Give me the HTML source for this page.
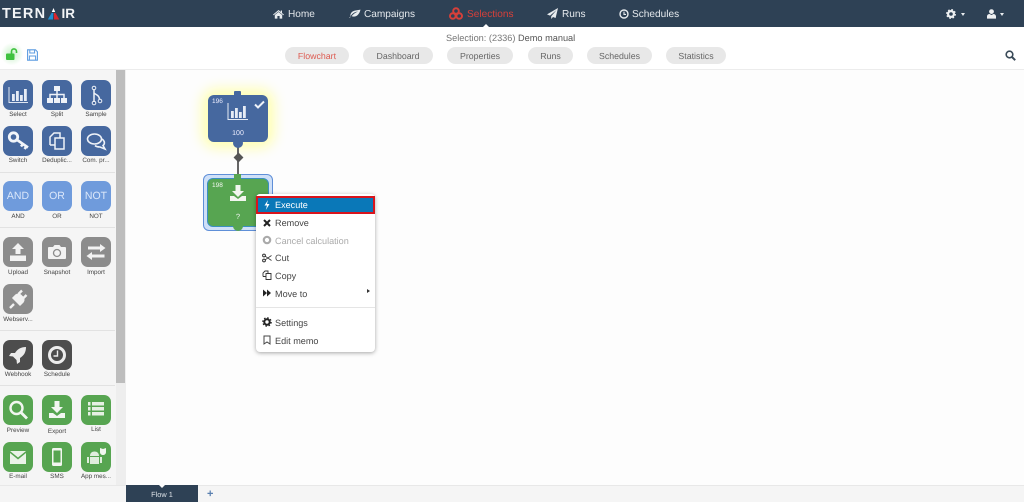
<!DOCTYPE html>
<html><head><meta charset="utf-8">
<style>
*{box-sizing:border-box}
html,body{margin:0;padding:0;width:1024px;height:502px;overflow:hidden;background:#fff;font-family:"Liberation Sans",sans-serif;text-rendering:geometricPrecision}
.a{position:absolute}
#nav{left:0;top:0;width:1024px;height:27px;background:#2e4155}
.nt{position:absolute;top:8px;font-size:10.1px;line-height:14px;color:#e4e8ec;white-space:nowrap}
.tab{position:absolute;top:47px;height:17px;border-radius:9px;background:#e8e8e8;color:#666;font-size:8.8px;line-height:18px;text-align:center}
.ic{position:absolute;width:30px;height:30px;border-radius:7px}
.ic svg{position:absolute;left:0;top:0;width:30px;height:30px}
.b{background:#46689f}.l{background:#6f9bdc}.g{background:#8c8c8c}.d{background:#4d4d4d}.gr{background:#57a551}
.lb{position:absolute;width:40px;text-align:center;font-size:6.3px;line-height:10px;color:#444;white-space:nowrap}
.txt{color:#dbe7fa;font-size:10.5px;line-height:31px;text-align:center;display:block}
.sep{position:absolute;left:0;width:115px;height:1px;background:#e2e2e2}
.mi{position:absolute;left:19px;font-size:9.1px;line-height:12px;color:#444;white-space:nowrap}
.mic{position:absolute;left:6px;width:10px;height:10px}
</style></head><body>

<div class="a" id="nav"></div>
<div class="a" style="left:2px;top:6px;font-size:14.5px;line-height:16px;font-weight:bold;color:#f2f4f6;letter-spacing:1.2px;white-space:nowrap">TERN</div>
<svg class="a" style="left:47px;top:8px" width="13" height="12" viewBox="0 0 13 12"><path d="M6.500 0 8.200 4H4.800z" fill="#fff"/><path d="M4.500 5H6.300L6 11.500H.8z" fill="#1f8ed0"/><path d="M6.800 5H8.500L12.300 11.500H7z" fill="#d9262e"/></svg>
<div class="a" style="left:61.500px;top:6px;font-size:13.500px;line-height:16px;font-weight:bold;color:#f2f4f6;white-space:nowrap">IR</div>

<svg class="a" style="left:273px;top:9px" width="11" height="10" viewBox="0 0 11 10"><path d="M5.500 1 0 5.600l.7.7L5.500 2.400l4.800 3.900.7-.7L9 4V1.500H7.800v1.400zM1.800 6v3.600h2.600V7h2.200v2.600h2.600V6L5.500 3z" fill="#e8ecef"/></svg>
<div class="nt" style="left:288px">Home</div>
<svg class="a" style="left:349px;top:9px" width="12" height="10" viewBox="0 0 12 10"><path d="M1 9C2 5 5 3 9 2.500 6 3.800 4 5.300 2.600 7.200 6 8.400 10 7 11.500.6 8 1.500 3 1 1.600 5c-.3.9-.2 1.500 0 2L.3 9z" fill="#e8ecef"/></svg>
<div class="nt" style="left:364px">Campaigns</div>
<svg class="a" style="left:449px;top:7px" width="14" height="13" viewBox="0 0 14 13"><g fill="none" stroke="#d6403a" stroke-width="2"><circle cx="7" cy="4" r="2.800"/><circle cx="3.800" cy="9" r="2.800"/><circle cx="10.200" cy="9" r="2.800"/></g></svg>
<div class="nt" style="left:467px;color:#d6403a">Selections</div>
<div class="a" style="left:483px;top:24px;width:0;height:0;border-left:3px solid transparent;border-right:3px solid transparent;border-bottom:3px solid #fff"></div>
<svg class="a" style="left:547px;top:8px" width="11" height="11" viewBox="0 0 11 11"><path d="M11 0 0 6.400l3 1.200L9.600 2 4.200 8.200V11l1.800-2 2.600 1z" fill="#e8ecef"/></svg>
<div class="nt" style="left:562px">Runs</div>
<svg class="a" style="left:619px;top:9px" width="10" height="10" viewBox="0 0 10 10"><circle cx="5" cy="5" r="4" fill="none" stroke="#e8ecef" stroke-width="1.400"/><path d="M5 2.600V5.400H7" fill="none" stroke="#e8ecef" stroke-width="1.100"/></svg>
<div class="nt" style="left:632px">Schedules</div>
<svg class="a" style="left:946px;top:9px" width="10" height="10" viewBox="0 0 10 10"><circle cx="5" cy="5" r="2.900" fill="none" stroke="#eef0f2" stroke-width="2.200"/><circle cx="5" cy="5" r="4.300" fill="none" stroke="#eef0f2" stroke-width="1.300" stroke-dasharray="1.700 1.700"/></svg>
<div class="a" style="left:961px;top:13px;border-left:2.500px solid transparent;border-right:2.500px solid transparent;border-top:3px solid #e8ecef"></div>
<svg class="a" style="left:987px;top:9px" width="9" height="10" viewBox="0 0 9 10"><circle cx="4.500" cy="2.600" r="2.400" fill="#eef0f2"/><path d="M0 9.600V7.400C0 5.800 1.500 5 2.500 5L4.500 6 6.500 5C7.500 5 9 5.800 9 7.400V9.600z" fill="#eef0f2"/></svg>
<div class="a" style="left:1000px;top:13px;border-left:2.500px solid transparent;border-right:2.500px solid transparent;border-top:3px solid #e8ecef"></div>

<div class="a" style="left:446px;top:32px;font-size:9.200px;line-height:13px;color:#777;white-space:nowrap">Selection: (2336) <span style="color:#555">Demo manual</span></div>

<div class="a" style="left:0;top:43px;width:24px;height:22px;background:radial-gradient(circle,#c8f2c8 0,rgba(216,245,216,.5) 45%,rgba(255,255,255,0) 70%)"></div>
<svg class="a" style="left:5px;top:48px" width="14" height="13" viewBox="0 0 14 13"><rect x="1" y="5.500" width="8.500" height="6.500" rx="1" fill="#3fc23f"/><path d="M6.500 5.500V3.500a2.500 2.500 0 0 1 5-.2V5" fill="none" stroke="#3fc23f" stroke-width="1.600"/></svg>
<svg class="a" style="left:27px;top:49px" width="11" height="12" viewBox="0 0 11 12"><path d="M.6.800H8.500L10.400 2.800V11.200H.6z" fill="#fff" stroke="#5b9be0" stroke-width="1.100"/><path d="M2.800 1V4H7.600V1M2.400 11V7H8.600V11" fill="none" stroke="#5b9be0" stroke-width="1"/></svg>

<div class="tab" style="left:285px;width:64px;color:#dd5a50">Flowchart</div>
<div class="tab" style="left:363px;width:70px">Dashboard</div>
<div class="tab" style="left:447px;width:66px">Properties</div>
<div class="tab" style="left:528px;width:45px">Runs</div>
<div class="tab" style="left:587px;width:65px">Schedules</div>
<div class="tab" style="left:666px;width:60px">Statistics</div>
<svg class="a" style="left:1005px;top:50px" width="11" height="11" viewBox="0 0 11 11"><circle cx="4.500" cy="4.500" r="3.300" fill="none" stroke="#3a4a58" stroke-width="1.600"/><path d="M7 7l3.200 3.200" stroke="#3a4a58" stroke-width="2"/></svg>

<div class="a" style="left:0;top:69px;width:1024px;height:1px;background:#ececec"></div>
<div class="a" style="left:0;top:70px;width:126px;height:432px;background:#f5f5f5"></div>
<div class="a" style="left:126px;top:70px;width:898px;height:415px;background:#fdfdfd"></div>
<div class="a" style="left:116px;top:70px;width:10px;height:415px;background:#eeeeee"></div>
<div class="a" style="left:116px;top:70px;width:9px;height:313px;background:#bdbdbd"></div>
<div class="a" style="left:0;top:485px;width:1024px;height:17px;background:#f5f5f5;border-top:1px solid #e8e8e8"></div>
<div class="a" style="left:126px;top:485px;width:72px;height:17px;background:#2e4155;color:#dde2e7;font-size:7.400px;line-height:19px;text-align:center">Flow 1</div>
<div class="a" style="left:158px;top:484px;border-left:4px solid transparent;border-right:4px solid transparent;border-top:4px solid #fdfdfd"></div>
<div class="a" style="left:207px;top:488px;font-size:11px;font-weight:bold;line-height:13px;color:#5a80b0">+</div>

<div class="sep" style="top:172px"></div><div class="sep" style="top:227px"></div><div class="sep" style="top:330px"></div><div class="sep" style="top:385px"></div>

<!-- row 1 -->
<div class="ic b" style="left:3px;top:80px"><svg viewBox="0 0 30 30"><path d="M6 7V22.500H25" fill="none" stroke="#dfe6f2" stroke-width="1"/><path d="M9 14h2.800v7H9zM13 11h2.800v10H13zM17 15h2.800v6H17zM21 9h2.800v12H21z" fill="#e6ecf5"/></svg></div>
<div class="ic b" style="left:42px;top:80px"><svg viewBox="0 0 30 30"><path d="M12 6h6v5h-6zM5 18h6v5H5zM12 18h6v5h-6zM19 18h6v5h-6z" fill="#eef2f8"/><path d="M15 11v7M8 18v-3.500H22V18" fill="none" stroke="#eef2f8" stroke-width="1.500"/></svg></div>
<div class="ic b" style="left:81px;top:80px"><svg viewBox="0 0 30 30"><path d="M13 9V22M13 13C15 15 18 15 18.500 19" fill="none" stroke="#eef2f8" stroke-width="1.500"/><circle cx="13" cy="8" r="1.800" fill="none" stroke="#eef2f8"/><circle cx="13" cy="23" r="1.800" fill="none" stroke="#eef2f8"/><circle cx="19" cy="21" r="1.800" fill="none" stroke="#eef2f8"/></svg></div>
<div class="lb" style="left:-2px;top:110px">Select</div><div class="lb" style="left:37px;top:110px">Split</div><div class="lb" style="left:76px;top:110px">Sample</div>
<!-- row 2 -->
<div class="ic b" style="left:3px;top:126px"><svg viewBox="0 0 30 30"><circle cx="10.500" cy="11" r="4.200" fill="none" stroke="#f2f5fa" stroke-width="2.800"/><path d="M13.500 13.500 25 21.500M20 18l-2 2.500M23.500 20.500l-2 2.500" fill="none" stroke="#f2f5fa" stroke-width="2.600"/></svg></div>
<div class="ic b" style="left:42px;top:126px"><svg viewBox="0 0 30 30"><path d="M8 19V11L12 7h6v5M13 12h9v11H13zM8 19h5" fill="none" stroke="#eef2f8" stroke-width="1.500"/></svg></div>
<div class="ic b" style="left:81px;top:126px"><svg viewBox="0 0 30 30"><ellipse cx="13.500" cy="13" rx="7" ry="5" fill="none" stroke="#eef2f8" stroke-width="1.600"/><path d="M21 13C24 15 24 18 22 19.500L24 23 19 21C17 21 15 20.500 14 19.500" fill="none" stroke="#eef2f8" stroke-width="1.600"/></svg></div>
<div class="lb" style="left:-2px;top:156px">Switch</div><div class="lb" style="left:37px;top:156px">Deduplic...</div><div class="lb" style="left:76px;top:156px">Com. pr...</div>
<!-- logic -->
<div class="ic l" style="left:3px;top:181px"><span class="txt">AND</span></div>
<div class="ic l" style="left:42px;top:181px"><span class="txt">OR</span></div>
<div class="ic l" style="left:81px;top:181px"><span class="txt">NOT</span></div>
<div class="lb" style="left:-2px;top:212px">AND</div><div class="lb" style="left:37px;top:212px">OR</div><div class="lb" style="left:76px;top:212px">NOT</div>
<!-- gray -->
<div class="ic g" style="left:3px;top:237px"><svg viewBox="0 0 30 30"><path d="M15 6l6 6h-3.500v5h-5v-5H9zM7 18.500h16V24H7z" fill="#f2f2f2"/></svg></div>
<div class="ic g" style="left:42px;top:237px"><svg viewBox="0 0 30 30"><path d="M7 10h4l1.500-2h5L19 10h4a1 1 0 0 1 1 1v10a1 1 0 0 1-1 1H7a1 1 0 0 1-1-1V11a1 1 0 0 1 1-1z" fill="#f2f2f2"/><circle cx="15" cy="16" r="3.500" fill="none" stroke="#8c8c8c" stroke-width="1.300"/></svg></div>
<div class="ic g" style="left:81px;top:237px"><svg viewBox="0 0 30 30"><path d="M7 9.500h12V7l5.500 4-5.500 4v-2.500H7zM23.500 17.500H11V15l-5.500 4 5.500 4v-2.500h12.500z" fill="#f2f2f2"/></svg></div>
<div class="lb" style="left:-2px;top:268px">Upload</div><div class="lb" style="left:37px;top:268px">Snapshot</div><div class="lb" style="left:76px;top:268px">Import</div>
<div class="ic g" style="left:3px;top:284px"><svg viewBox="0 0 30 30"><path d="M7 24l4-4" stroke="#f2f2f2" stroke-width="2.400"/><path d="M10 14l7 7 3-3c1-1.500 1-3 0-4.500l-2.500-2.500c-1.500-1-3-1-4.500 0z" fill="#f2f2f2" stroke="#f2f2f2" stroke-width="1.500"/><path d="M15.500 10l3.500-3.500M20 14.500l3.500-3.500" stroke="#f2f2f2" stroke-width="2.400"/></svg></div>
<div class="lb" style="left:-2px;top:315px">Webserv...</div>
<!-- dark -->
<div class="ic d" style="left:3px;top:340px"><svg viewBox="0 0 30 30"><path d="M23 7c-5 0-8.500 2-11 6H8l-2 3 4 .5 3.500 3.500.5 4 3-2v-4c4-2.500 6-6 6-11z" fill="#ececec"/></svg></div>
<div class="ic d" style="left:42px;top:340px"><svg viewBox="0 0 30 30"><circle cx="15" cy="15" r="7.500" fill="none" stroke="#ececec" stroke-width="3"/><path d="M15.500 10.500V16H11.500" fill="none" stroke="#ececec" stroke-width="1.400"/></svg></div>
<div class="lb" style="left:-2px;top:370px">Webhook</div><div class="lb" style="left:37px;top:370px">Schedule</div>
<!-- green -->
<div class="ic gr" style="left:3px;top:395px"><svg viewBox="0 0 30 30"><circle cx="13.500" cy="13" r="6" fill="none" stroke="#f2f6f0" stroke-width="2.400"/><path d="M18 17.500l6 6" stroke="#f2f6f0" stroke-width="2.800"/></svg></div>
<div class="ic gr" style="left:42px;top:395px"><svg viewBox="0 0 30 30"><path d="M12.500 6h5v6H21l-6 6-6-6h3.500zM7 18h4l4 3 4-3h4v5H7z" fill="#f2f6f0"/></svg></div>
<div class="ic gr" style="left:81px;top:395px"><svg viewBox="0 0 30 30"><path d="M7 7h2.500v3.500H7zM11 7h12v3.500H11zM7 12h2.500v3.500H7zM11 12h12v3.500H11zM7 17h2.500v3.500H7zM11 17h12v3.500H11z" fill="#e6f0e4"/></svg></div>
<div class="lb" style="left:-2px;top:426px">Preview</div><div class="lb" style="left:37px;top:427px">Export</div><div class="lb" style="left:76px;top:425px">List</div>
<div class="ic gr" style="left:3px;top:442px"><svg viewBox="0 0 30 30"><path d="M7 9H23L15 15.500zM7 11l8 6.500 8-6.500V22H7z" fill="#eaf3e8"/></svg></div>
<div class="ic gr" style="left:42px;top:442px"><svg viewBox="0 0 30 30"><rect x="10" y="6" width="10" height="18" rx="1.500" fill="#f2f6f0"/><rect x="11.500" y="8.500" width="7" height="12" fill="#57a551"/></svg></div>
<div class="ic gr" style="left:81px;top:442px"><svg viewBox="0 0 30 30"><path d="M9 15h9v7H9zM9 14c0-3 2-4.500 4.500-4.500S18 11 18 14zM6 15h2v6H6zM19 15h2v6h-2z" fill="#e0eddd"/><path d="M19 6l3 1 3-1v4c0 2-1.500 3-3 3s-3-1-3-3z" fill="#f2f6f0"/></svg></div>
<div class="lb" style="left:-2px;top:472px">E-mail</div><div class="lb" style="left:37px;top:472px">SMS</div><div class="lb" style="left:76px;top:472px">App mes...</div>

<!-- flow -->
<div class="a" style="left:208px;top:95px;width:60px;height:47px;background:#ffffa0;box-shadow:0 0 13px 6px #ffffb0;border-radius:8px"></div>
<div class="a" style="left:237px;top:143px;width:2px;height:34px;background:#666"></div>
<div class="a" style="left:234.500px;top:154px;width:7px;height:7px;background:#555;transform:rotate(45deg)"></div>
<div class="a" style="left:234px;top:91px;width:7px;height:6px;background:#46689f;border-radius:1px"></div>
<div class="a" style="left:208px;top:95px;width:60px;height:47px;background:#46689f;border-radius:6px"></div>
<div class="a" style="left:233px;top:138px;width:10px;height:10px;background:#46689f;border-radius:5px"></div>
<div class="a" style="left:212px;top:98px;font-size:6.500px;line-height:8px;color:#eef">196</div>
<svg class="a" style="left:227px;top:102px" width="22" height="19" viewBox="0 0 22 19"><path d="M1 1V17.500H21" fill="none" stroke="#e6ecf5" stroke-width="1"/><path d="M4 9h2.800v7H4zM8 6h2.800v10H8zM12 10h2.800v6H12zM16 4h2.800v12H16z" fill="#e6ecf5"/></svg>
<svg class="a" style="left:254px;top:100px" width="11" height="9" viewBox="0 0 11 9"><path d="M1 4.500 4 7.500 10 1.500" fill="none" stroke="#eef2f8" stroke-width="2"/></svg>
<div class="a" style="left:208px;top:129px;width:60px;text-align:center;font-size:7px;line-height:9px;color:#eef">100</div>

<div class="a" style="left:203px;top:174px;width:70px;height:57px;background:#cfe0f8;border:1px solid #5f8fd8;border-radius:6px"></div>
<div class="a" style="left:207px;top:178px;width:62px;height:49px;background:#57a551;border:1px solid #3b8fc0;border-radius:6px"></div>
<div class="a" style="left:234px;top:174px;width:7px;height:6px;background:#57a551"></div>
<div class="a" style="left:233px;top:221px;width:10px;height:10px;background:#57a551;border-radius:5px"></div>
<div class="a" style="left:212px;top:182px;font-size:6.500px;line-height:8px;color:#f2f6f0">198</div>
<svg class="a" style="left:229px;top:185px" width="18" height="16" viewBox="0 0 18 16"><path d="M6.500 0h5v6H15L9 12 3 6h3.500zM1 11h4l4 3 4-3h4v5H1z" fill="#f2f6f0"/></svg>
<div class="a" style="left:208px;top:212px;width:60px;text-align:center;font-size:7.500px;line-height:9px;color:#f2f6f0">?</div>

<!-- context menu -->
<div class="a" style="left:256px;top:194px;width:119px;height:158px;background:#fff;border-radius:4px;box-shadow:0 1px 4px rgba(0,0,0,.35)"></div>
<div class="a" style="left:256px;top:196px;width:119px;height:18px;background:#0a78b8;border:2px solid #d9141c"></div>
<div class="a" style="left:256px;top:194px;width:119px;height:158px">
<svg class="mic" style="top:6px" viewBox="0 0 10 10"><path d="M6 0 2.500 5.500H5L3.800 10 7.500 4H5z" fill="#fff"/></svg>
<div class="mi" style="top:5px;color:#fff">Execute</div>
<svg class="mic" style="top:24px" viewBox="0 0 10 10"><path d="M2 2l6 6M8 2l-6 6" stroke="#222" stroke-width="2"/></svg>
<div class="mi" style="top:23px">Remove</div>
<svg class="mic" style="top:41px" viewBox="0 0 10 10"><circle cx="5" cy="5" r="3.200" fill="none" stroke="#aaa" stroke-width="2.200"/></svg>
<div class="mi" style="top:41px;color:#aaa">Cancel calculation</div>
<svg class="mic" style="top:59px" viewBox="0 0 10 10"><circle cx="2" cy="2.500" r="1.400" fill="none" stroke="#333"/><circle cx="2" cy="7.500" r="1.400" fill="none" stroke="#333"/><path d="M3.200 3.200 9.500 7.500M3.200 6.800 9.500 2.500" stroke="#333" stroke-width=".8"/></svg>
<div class="mi" style="top:58px">Cut</div>
<svg class="mic" style="top:76px" viewBox="0 0 10 10"><path d="M1 6.500V3L3 1h3v2.500M4 3.500h5v6H4zM1 6.500h3" fill="none" stroke="#333" stroke-width=".9"/></svg>
<div class="mi" style="top:76px">Copy</div>
<svg class="mic" style="top:94px" viewBox="0 0 10 10"><path d="M1 1.500 5 5 1 8.500zM5 1.500 9 5 5 8.500z" fill="#222"/></svg>
<div class="mi" style="top:94px">Move to</div>
<div class="a" style="left:111px;top:95px;border-top:2.500px solid transparent;border-bottom:2.500px solid transparent;border-left:3px solid #333"></div>
<div class="a" style="left:0;top:113px;width:119px;height:1px;background:#e5e5e5"></div>
<svg class="mic" style="top:123px" viewBox="0 0 10 10"><circle cx="5" cy="5" r="2.700" fill="none" stroke="#222" stroke-width="2"/><circle cx="5" cy="5" r="4.200" fill="none" stroke="#222" stroke-width="1.200" stroke-dasharray="1.600 1.700"/></svg>
<div class="mi" style="top:123px">Settings</div>
<svg class="mic" style="top:141px" viewBox="0 0 10 10"><path d="M2 1H8V9L5 7 2 9z" fill="none" stroke="#444" stroke-width="1"/></svg>
<div class="mi" style="top:141px">Edit memo</div>
</div>
</body></html>
